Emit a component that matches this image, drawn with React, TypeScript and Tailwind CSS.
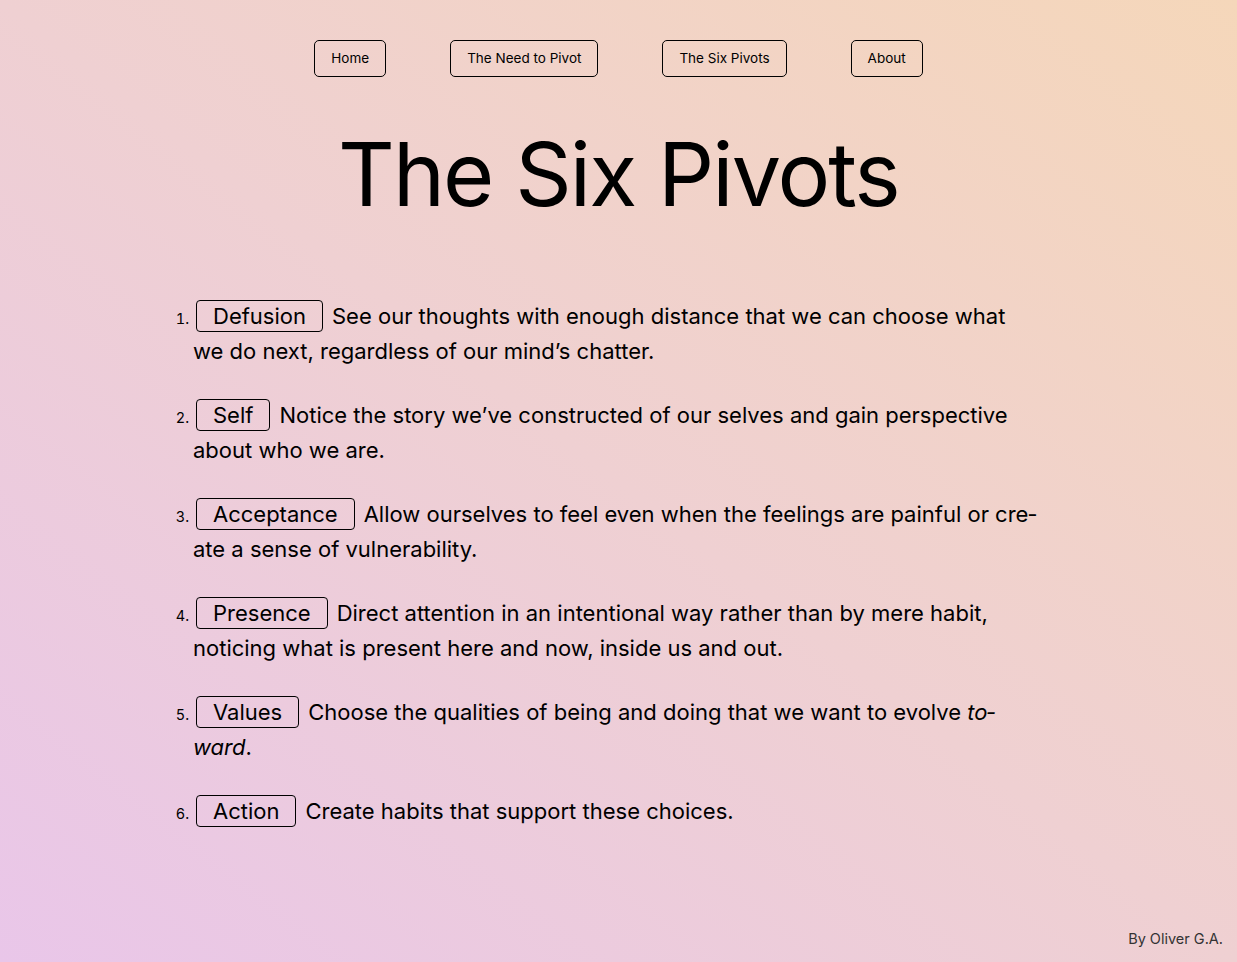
import React from "react";

const items: { label: string; text: React.ReactNode }[] = [
  {
    label: "Defusion",
    text: "See our thoughts with enough distance that we can choose what we do next, regardless of our mind’s chatter.",
  },
  {
    label: "Self",
    text: "Notice the story we’ve constructed of our selves and gain perspective about who we are.",
  },
  {
    label: "Acceptance",
    text: "Allow ourselves to feel even when the feelings are painful or cre\u00ADate a sense of vulnerability.",
  },
  {
    label: "Presence",
    text: "Direct attention in an intentional way rather than by mere habit, noticing what is present here and now, inside us and out.",
  },
  {
    label: "Values",
    text: (
      <>
        Choose the qualities of being and doing that we want to evolve <em>to{"\u00AD"}ward</em>.
      </>
    ),
  },
  {
    label: "Action",
    text: "Create habits that support these choices.",
  },
];

const nav = ["Home", "The Need to Pivot", "The Six Pivots", "About"];

export default function App() {
  return (
    <div
      className="min-h-screen w-full flex flex-col text-black bg-[linear-gradient(to_top_right,#e9c6e9,#efd0d2,#f5d7ba)]"
      style={{ fontFamily: "Inter, 'Noto Sans', sans-serif" }}
    >
      <nav className="flex justify-center gap-16 pt-[40px]">
        {nav.map((n) => (
          <a
            key={n}
            className="border border-black rounded-[5px] px-4 h-[37px] flex items-center text-[13.5px] text-black"
          >
            {n}
          </a>
        ))}
      </nav>
      <h1 className="text-center text-[88px] leading-none font-normal mt-[53px] tracking-[-0.022em]">
        The Six Pivots
      </h1>
      <div className="w-[844px] ml-[193px] mt-[81px]">
        <ol className="list-decimal list-outside marker:text-[14.5px]">
          {items.map((it) => (
            <li key={it.label} className="text-[22px] leading-[35px] mb-[29px]">
              <span className="inline-block border border-black rounded-[4px] px-4 leading-[30px] ml-[3px] mr-[9px]">
                {it.label}
              </span>
              {it.text}
            </li>
          ))}
        </ol>
      </div>
      <div className="mt-auto self-end pr-[14px] pb-[12px] text-[14.5px] text-[#333]">By Oliver G.A.</div>
    </div>
  );
}
